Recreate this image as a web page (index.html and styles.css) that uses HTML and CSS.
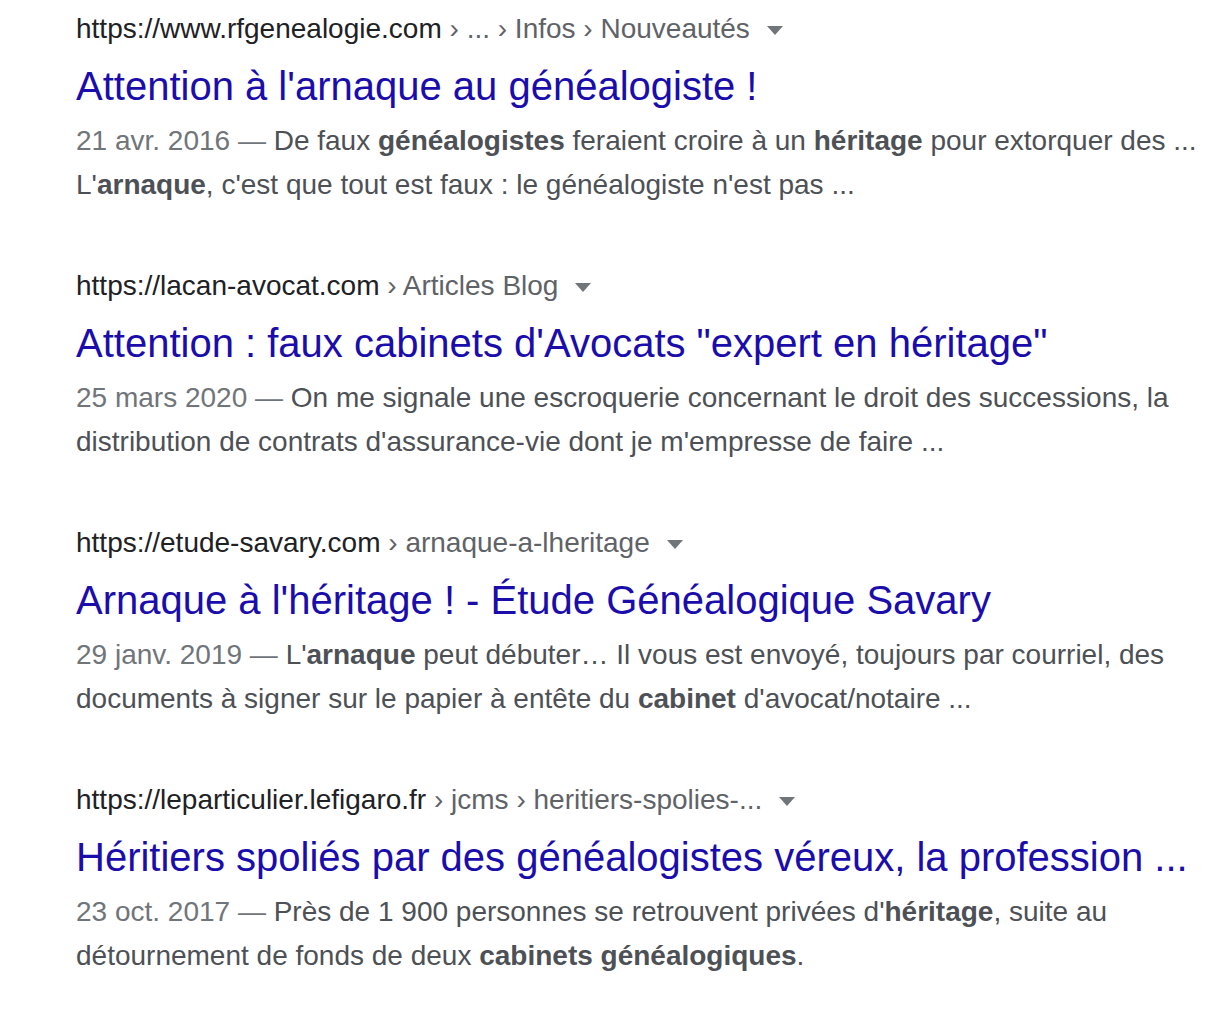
FILE: index.html
```html
<!DOCTYPE html>
<html lang="fr">
<head>
<meta charset="utf-8">
<link rel="stylesheet" href="styles.css">
</head>
<body>
<div class="results">
  <div class="result">
    <div class="cite"><span class="host">https://www.rfgenealogie.com</span><span class="crumbs"> › ... › Infos › Nouveautés</span><span class="caret"></span></div>
    <h3 class="title">Attention à l'arnaque au généalogiste !</h3>
    <div class="snippet"><span class="date">21 avr. 2016 — </span>De faux <b>généalogistes</b> feraient croire à un <b>héritage</b> pour extorquer des ... L'<b>arnaque</b>, c'est que tout est faux : le généalogiste n'est pas ...</div>
  </div>
  <div class="result">
    <div class="cite"><span class="host">https://lacan-avocat.com</span><span class="crumbs"> › Articles Blog</span><span class="caret"></span></div>
    <h3 class="title">Attention : faux cabinets d'Avocats "expert en héritage"</h3>
    <div class="snippet"><span class="date">25 mars 2020 — </span>On me signale une escroquerie concernant le droit des successions, la distribution de contrats d'assurance-vie dont je m'empresse de faire ...</div>
  </div>
  <div class="result">
    <div class="cite"><span class="host">https://etude-savary.com</span><span class="crumbs"> › arnaque-a-lheritage</span><span class="caret"></span></div>
    <h3 class="title">Arnaque à l'héritage ! - Étude Généalogique Savary</h3>
    <div class="snippet"><span class="date">29 janv. 2019 — </span>L'<b>arnaque</b> peut débuter… Il vous est envoyé, toujours par courriel, des documents à signer sur le papier à entête du <b>cabinet</b> d'avocat/notaire ...</div>
  </div>
  <div class="result">
    <div class="cite"><span class="host">https://leparticulier.lefigaro.fr</span><span class="crumbs"> › jcms › heritiers-spolies-...</span><span class="caret"></span></div>
    <h3 class="title">Héritiers spoliés par des généalogistes véreux, la profession ...</h3>
    <div class="snippet"><span class="date">23 oct. 2017 — </span>Près de 1 900 personnes se retrouvent privées d'<b>héritage</b>, suite au détournement de fonds de deux <b>cabinets généalogiques</b>.</div>
  </div>
</div>
</body>
</html>
```

FILE: styles.css
```css
html, body {
  margin: 0;
  padding: 0;
  background: #ffffff;
}
body {
  font-family: "Liberation Sans", Arial, sans-serif;
}
.results {
  padding: 7px 0 0 76px;
  width: 1124px;
}
.result {
  margin-bottom: 57px;
}
.cite {
  display: flex;
  align-items: center;
  font-size: 28px;
  line-height: 44px;
  height: 44px;
  white-space: pre;
}
.host {
  color: #202124;
}
.crumbs {
  color: #5f6368;
}
.caret {
  width: 0;
  height: 0;
  border-left: 8px solid transparent;
  border-right: 8px solid transparent;
  border-top: 9px solid #70757a;
  margin-left: 17px;
  margin-top: 2px;
}
.title {
  margin: 9px 0 7px;
  font-size: 40px;
  line-height: 52px;
  font-weight: normal;
  color: #1a0dab;
  white-space: nowrap;
}
.snippet {
  font-size: 28px;
  line-height: 44px;
  color: #4d5156;
}
.snippet b {
  font-weight: bold;
}
.date {
  color: #70757a;
}
```
